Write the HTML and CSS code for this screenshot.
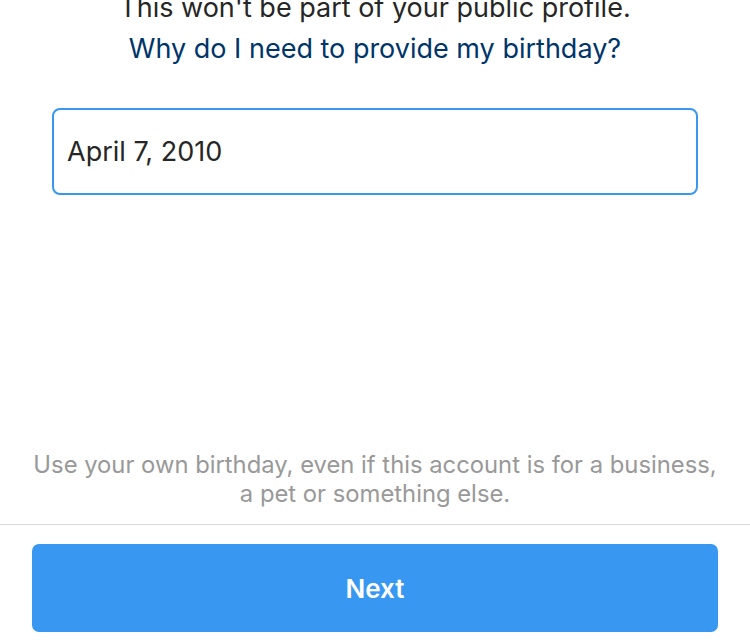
FILE: index.html
```html
<!DOCTYPE html>
<html lang="en">
<head>
<meta charset="utf-8">
<title>Birthday</title>
<link rel="stylesheet" href="styles.css">
</head>
<body>
<div class="page">
  <div class="intro">
    <p class="lead">This won't be part of your public profile.</p>
    <a class="why" href="#">Why do I need to provide my birthday?</a>
  </div>
  <div class="field"><span class="value">April 7, 2010</span></div>
  <p class="note">Use your own birthday, even if this account is for a business, a pet or something else.</p>
  <div class="divider"></div>
  <div class="footer">
    <button class="next" type="button">Next</button>
  </div>
</div>
</body>
</html>
```
FILE: styles.css
```css
html, body {
  margin: 0;
  padding: 0;
  background: #fff;
}
body {
  font-family: Inter, "Noto Sans", sans-serif;
  overflow: hidden;
}
.page {
  height: 640px;
  display: flex;
  flex-direction: column;
  overflow: hidden;
}
.intro {
  margin-top: -13px;
  text-align: center;
  font-size: 27px;
  line-height: 41px;
}
.lead {
  margin: 0;
  color: #262626;
}
.why {
  display: block;
  color: #003569;
  text-decoration: none;
}
.field {
  margin: 39px 52px 0;
  height: 83px;
  border: 2px solid #3897f0;
  border-radius: 8px;
  display: flex;
  align-items: center;
  padding-left: 13px;
}
.value {
  font-size: 27px;
  color: #262626;
}
.note {
  margin: auto 28px 0;
  text-align: center;
  font-size: 23.8px;
  line-height: 29px;
  color: #999999;
}
.divider {
  margin-top: 16px;
  height: 1px;
  background: #dbdbdb;
}
.footer {
  padding: 19px 32px 8px;
}
.next {
  display: block;
  width: 100%;
  height: 88px;
  border: 0;
  border-radius: 7px;
  background: #3897f0;
  color: #fff;
  font-family: inherit;
  font-size: 26px;
  font-weight: 600;
}
```
